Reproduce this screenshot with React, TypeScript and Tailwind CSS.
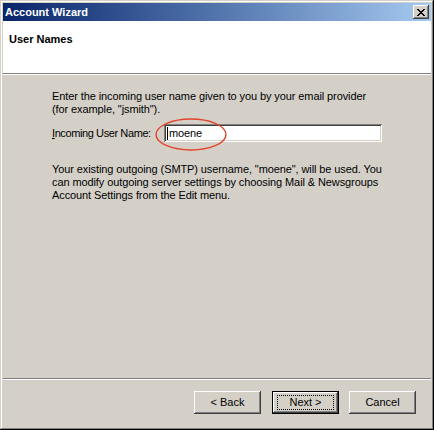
import React from "react";

const font = { fontFamily: '"Liberation Sans", Arial, sans-serif' };

const raised =
  "shadow-[inset_-1px_-1px_#404040,inset_1px_1px_#ffffff,inset_-2px_-2px_#808080,inset_2px_2px_#d4d0c8]";

const WizardButton = ({
  label,
  isDefault = false,
  className = "",
}: {
  label: string;
  isDefault?: boolean;
  className?: string;
}) => {
  if (isDefault) {
    return (
      <button
        className={`w-[67px] h-[23px] bg-[#d4d0c8] border border-black p-0 ${className}`}
      >
        <div
          className={`w-full h-full flex items-center justify-center ${raised}`}
        >
          <div className="w-[57px] h-[15px] border border-dotted border-black flex items-center justify-center text-[11px] leading-none text-black">
            {label}
          </div>
        </div>
      </button>
    );
  }
  return (
    <button
      className={`w-[67px] h-[23px] bg-[#d4d0c8] flex items-center justify-center text-[11px] leading-none text-black ${raised} ${className}`}
    >
      {label}
    </button>
  );
};

const App = () => {
  return (
    <div
      className="w-[434px] h-[430px] bg-[#d4d0c8] p-[3px] flex flex-col shadow-[inset_-1px_-1px_#000000,inset_1px_1px_#d4d0c8,inset_-2px_-2px_#808080,inset_2px_2px_#ffffff]"
      style={font}
    >
      {/* title bar */}
      <div className="h-[18px] shrink-0 flex items-center justify-between bg-gradient-to-r from-[#0a246a] to-[#a6caf0] pl-[2px] pr-[2px]">
        <span className="text-white font-bold text-[11px] leading-none">
          Account Wizard
        </span>
        <div
          className={`w-[16px] h-[14px] bg-[#d4d0c8] flex items-center justify-center ${raised}`}
        >
          <svg width="8" height="7" viewBox="0 0 8 7">
            <path
              d="M0 0h2v1h1v1h2v-1h1v-1h2v1h-1v1h-1v1h-1v1h1v1h1v1h1v1h-2v-1h-1v-1h-2v1h-1v1h-2v-1h1v-1h1v-1h1v-1h-1v-1h-1v-1h-1z"
              fill="#000"
            />
          </svg>
        </div>
      </div>

      {/* header */}
      <div className="h-[52px] shrink-0 bg-white pl-[6px] pt-[12px]">
        <div className="text-[11px] font-bold leading-[13px] text-black">
          User Names
        </div>
      </div>
      <div className="h-px bg-[#808080] shrink-0" />
      <div className="h-px bg-white shrink-0" />

      {/* body */}
      <div className="flex-1 pl-[49px] pt-[15px] text-[11px] leading-[13px] tracking-[-0.1px] text-black">
        <p className="whitespace-nowrap">
          Enter the incoming user name given to you by your email provider
          <br />
          (for example, "jsmith").
        </p>

        <div className="mt-[8px] flex items-center">
          <label className="w-[112px] shrink-0 whitespace-nowrap tracking-[-0.4px]">
            <span className="underline">I</span>ncoming User Name:
          </label>
          <div className="relative">
            <div className="w-[218px] h-[18px] bg-white shadow-[inset_1px_1px_#808080,inset_-1px_-1px_#ffffff,inset_2px_2px_#404040,inset_-2px_-2px_#d4d0c8] flex items-center pl-[3px]">
              <span className="w-px h-[13px] bg-black mr-px" />
              <span>moene</span>
            </div>
            <svg
              className="absolute left-[-9px] top-[-6px] pointer-events-none"
              width="72"
              height="33"
              viewBox="0 0 72 33"
            >
              <ellipse
                cx="36"
                cy="16.5"
                rx="35"
                ry="15.5"
                fill="none"
                stroke="#e3452c"
                strokeWidth="1.4"
              />
            </svg>
          </div>
        </div>

        <p className="mt-[21px] whitespace-nowrap">
          Your existing outgoing (SMTP) username, "moene", will be used. You
          <br />
          can modify outgoing server settings by choosing Mail &amp; Newsgroups
          <br />
          Account Settings from the Edit menu.
        </p>
      </div>

      <div className="h-px bg-[#808080] shrink-0" />
      <div className="h-px bg-white shrink-0" />

      {/* footer */}
      <div className="h-[47px] shrink-0 flex justify-end items-start pt-[11px] pr-[15px]">
        <WizardButton label="< Back" className="mr-[11px]" />
        <WizardButton label="Next >" isDefault className="mr-[10px]" />
        <WizardButton label="Cancel" />
      </div>
    </div>
  );
};

export default App;
